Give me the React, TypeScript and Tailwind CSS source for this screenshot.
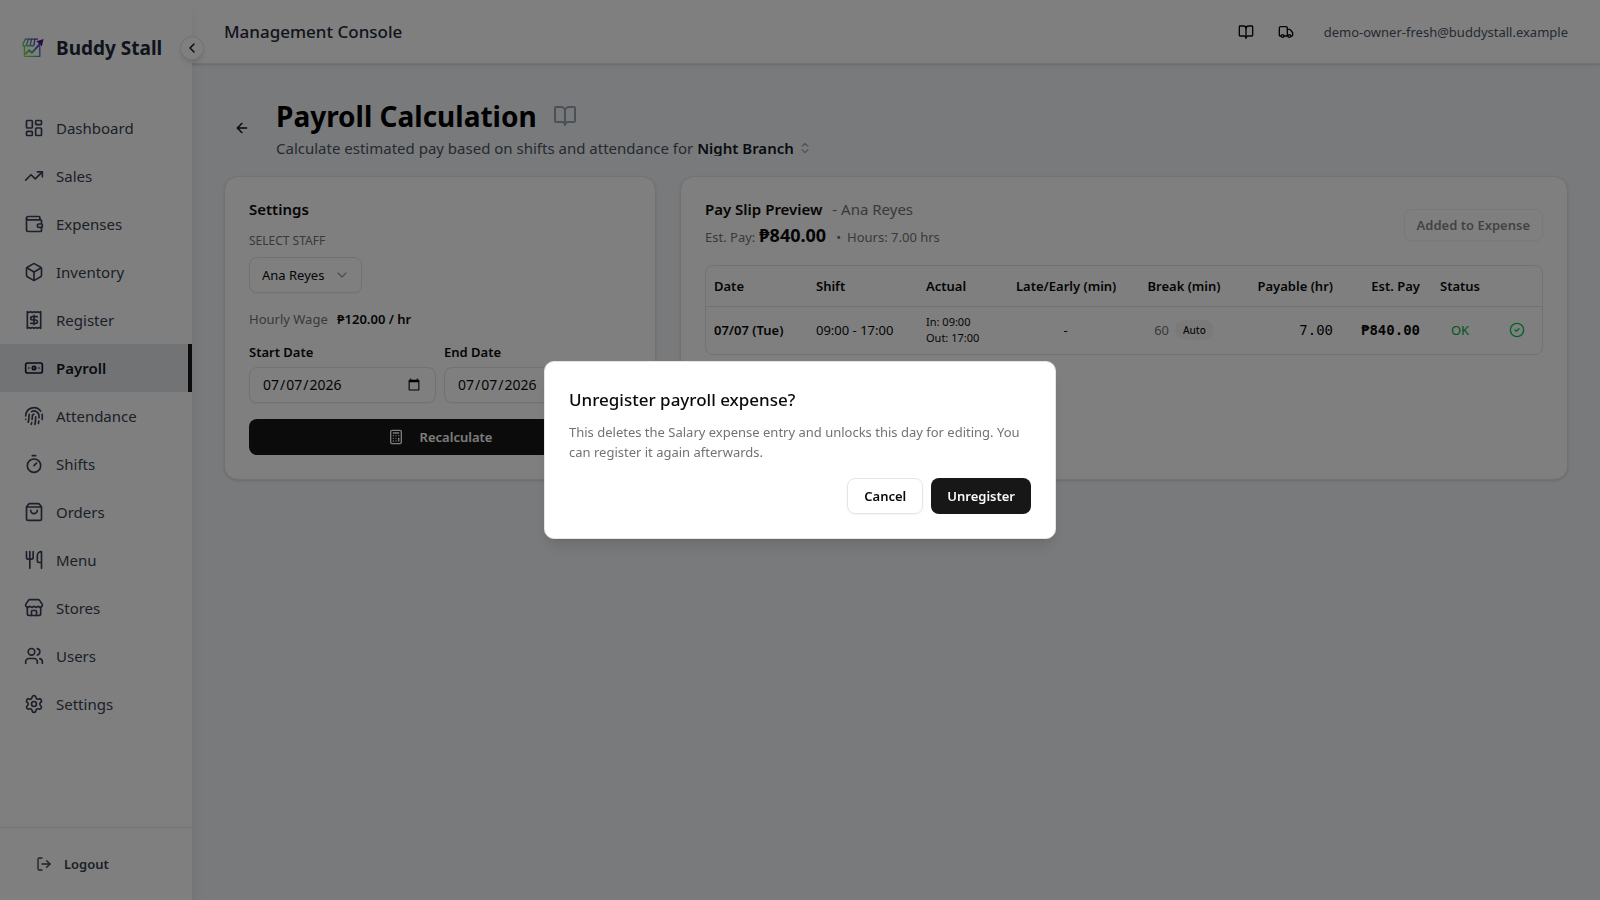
import {useState} from "react";
import {LayoutDashboard,TrendingUp,Wallet,Box,Receipt,Banknote,Fingerprint,Timer,ShoppingBag,Utensils,Store,Users,Settings,LogOut,BookOpen,Truck,ChevronLeft,ChevronDown,ChevronsUpDown,ArrowLeft,Calculator,CircleCheck} from "lucide-react";

const NAV=[
  {label:"Dashboard",icon:LayoutDashboard},
  {label:"Sales",icon:TrendingUp},
  {label:"Expenses",icon:Wallet},
  {label:"Inventory",icon:Box},
  {label:"Register",icon:Receipt},
  {label:"Payroll",icon:Banknote},
  {label:"Attendance",icon:Fingerprint},
  {label:"Shifts",icon:Timer},
  {label:"Orders",icon:ShoppingBag},
  {label:"Menu",icon:Utensils},
  {label:"Stores",icon:Store},
  {label:"Users",icon:Users},
  {label:"Settings",icon:Settings},
];

function Logo() {
  return (
    <svg viewBox="0 0 22 20" className="h-5 w-[22px] shrink-0" fill="none" strokeLinecap="round" strokeLinejoin="round">
      <defs>
        <linearGradient id="stall" x1="0" y1="18" x2="22" y2="2" gradientUnits="userSpaceOnUse">
          <stop offset="0" stopColor="#a3e635"/>
          <stop offset="0.35" stopColor="#4cc46a"/>
          <stop offset="0.65" stopColor="#4a5fb0"/>
          <stop offset="1" stopColor="#4c1d95"/>
        </linearGradient>
      </defs>
      <g stroke="url(#stall)" strokeWidth="1.3">
        <path d="M15.5 1.2H3.2L.8 6.2c0 2.6 3.6 2.6 3.8 0 .2 2.6 3.6 2.6 3.8 0 .2 2.6 3.4 2.6 3.8 0"/>
        <path d="M6.4 1.2 4.6 6.2M9.6 1.2 8.4 6.2M12.8 1.2l-.6 5"/>
        <path d="M2.4 8.4v10h15.4V8.6"/>
      </g>
      <path d="m3.8 15.6 3.4-3.4 2.6 2.6 8.4-9.2" stroke="url(#stall)" strokeWidth="2"/>
      <path d="M14.4 3.2 21.6 1l-1.8 7.4z" fill="#4c1d95"/>
    </svg>
  );
}

export default function App() {
  const [open,setOpen]=useState(true);
  const [staff,setStaff]=useState("Ana Reyes");
  const [start,setStart]=useState("2026-07-07");
  const [end,setEnd]=useState("2026-07-07");
  const dateInput="h-9 w-full min-w-0 rounded-lg border border-neutral-200 bg-white px-3 text-sm shadow-xs";
  return (
    <div className="flex min-h-screen bg-gray-100 font-['Noto_Sans',sans-serif] text-[13px] leading-5 text-neutral-950">
      <aside className="relative z-10 flex w-48 shrink-0 flex-col bg-white shadow-lg">
        <div className="flex h-24 items-center gap-3 pl-[22px]">
          <Logo/>
          <span className="text-[19px] font-bold text-gray-800">Buddy Stall</span>
        </div>
        <button aria-label="Collapse sidebar" className="absolute top-9 -right-3 flex size-6 items-center justify-center rounded-full border border-gray-200 bg-white shadow-md">
          <ChevronLeft className="size-4"/>
        </button>
        <nav className="flex-1 pt-2">
          {NAV.map(({label,icon:Icon})=>(
            <a key={label} href="#" className={`flex h-12 items-center gap-3 pl-6 text-[15px] ${label==="Payroll"?"border-r-4 border-neutral-900 bg-gray-200 font-semibold text-gray-900":"text-gray-700"}`}>
              <Icon className="size-5"/>{label}
            </a>
          ))}
        </nav>
        <div className="border-t border-gray-200 p-4">
          <button className="flex h-10 items-center gap-3 px-5 font-semibold text-gray-700"><LogOut className="size-4"/>Logout</button>
        </div>
      </aside>

      <div className="flex min-w-0 flex-1 flex-col">
        <header className="flex h-16 items-center justify-between border-b border-gray-200 bg-white px-8 shadow-sm">
          <span className="text-[17px] font-medium text-gray-800">Management Console</span>
          <div className="flex items-center gap-5">
            <div className="flex gap-1">
              <button aria-label="Guide" className="flex size-9 items-center justify-center"><BookOpen className="size-4"/></button>
              <button aria-label="Deliveries" className="flex size-9 items-center justify-center"><Truck className="size-4"/></button>
            </div>
            <span className="text-gray-600">demo-owner-fresh@buddystall.example</span>
          </div>
        </header>

        <main className="p-8">
          <div className="mb-4 flex items-center gap-4">
            <button aria-label="Back" className="flex size-9 items-center justify-center"><ArrowLeft className="size-4"/></button>
            <div>
              <div className="flex items-center gap-4">
                <h1 className="text-[28px] leading-10 font-bold text-black">Payroll Calculation</h1>
                <BookOpen className="size-6 text-gray-400"/>
              </div>
              <div className="flex h-6 items-center gap-1 text-[15px] text-gray-600">
                <span>Calculate estimated pay based on shifts and attendance for</span>
                <button className="flex items-center gap-1 font-semibold text-gray-900">
                  <span className="overflow-hidden leading-4">Night Branch</span>
                  <ChevronsUpDown className="size-3.5 text-gray-400"/>
                </button>
              </div>
            </div>
          </div>

          <div className="grid grid-cols-3 items-start gap-6">
            <section className="rounded-[14px] border border-neutral-200 bg-white p-6 shadow-sm">
              <h2 className="text-[15px] leading-4 font-semibold">Settings</h2>
              <label htmlFor="staff" className="mt-4 block text-xs leading-4 text-neutral-500">SELECT STAFF</label>
              <div className="relative mt-2 w-fit">
                <select id="staff" value={staff} onChange={e=>setStaff(e.target.value)} className="h-9 appearance-none rounded-lg border border-neutral-200 bg-white pr-9 pl-3 shadow-xs">
                  <option>Ana Reyes</option>
                </select>
                <ChevronDown className="pointer-events-none absolute top-2.5 right-3 size-4 text-neutral-400"/>
              </div>
              <p className="mt-4 text-neutral-500">Hourly Wage <span className="ml-1.5 font-semibold text-neutral-950">₱120.00 / hr</span></p>
              <div className="mt-4 grid grid-cols-2 gap-2">
                <div>
                  <label htmlFor="start" className="mb-2 block leading-[14px] font-semibold">Start Date</label>
                  <input id="start" type="date" value={start} onChange={e=>setStart(e.target.value)} className={dateInput}/>
                </div>
                <div>
                  <label htmlFor="end" className="mb-2 block leading-[14px] font-semibold">End Date</label>
                  <input id="end" type="date" value={end} onChange={e=>setEnd(e.target.value)} className={dateInput}/>
                </div>
              </div>
              <button className="mt-4 flex h-9 w-full items-center justify-center gap-4 rounded-lg bg-neutral-900 font-semibold text-neutral-50"><Calculator className="size-4"/>Recalculate</button>
            </section>

            <section className="col-span-2 self-stretch rounded-[14px] border border-neutral-200 bg-white p-6 shadow-sm">
              <div className="flex items-center justify-between">
                <div>
                  <h2 className="text-[15px] leading-4 font-semibold">Pay Slip Preview <span className="ml-1.5 font-normal text-neutral-500">- Ana Reyes</span></h2>
                  <p className="mt-1 flex h-7 items-baseline leading-7 text-neutral-500">Est. Pay:<span className="mx-1 text-lg leading-7 font-bold text-neutral-950">₱840.00</span><span className="mx-1.5">•</span>Hours: 7.00 hrs</p>
                </div>
                <button disabled className="h-8 rounded-lg border border-neutral-200 px-3 font-semibold opacity-50 shadow-xs">Added to Expense</button>
              </div>
              <div className="mt-4 overflow-hidden rounded-lg border border-neutral-200">
                <table className="w-full table-fixed">
                  <thead>
                    <tr className="h-10 border-b border-neutral-200 text-left whitespace-nowrap *:px-2 *:font-semibold">
                      <th className="w-[102px]">Date</th>
                      <th className="w-[110px]">Shift</th>
                      <th className="w-[90px]">Actual</th>
                      <th className="text-center">Late/Early (min)</th>
                      <th className="w-[122px] text-center">Break (min)</th>
                      <th className="w-24 text-right">Payable (hr)</th>
                      <th className="w-[87px] text-right">Est. Pay</th>
                      <th className="w-16 text-center">Status</th>
                      <th className="w-[50px]"></th>
                    </tr>
                  </thead>
                  <tbody>
                    <tr className="h-12 whitespace-nowrap *:px-2">
                      <td className="font-semibold">07/07 (Tue)</td>
                      <td>09:00 - 17:00</td>
                      <td className="text-[11px] leading-4">In: 09:00<br/>Out: 17:00</td>
                      <td className="text-center">-</td>
                      <td>
                        <div className="flex items-center justify-center gap-1.5 text-neutral-500">60<span className="rounded-full bg-neutral-100 px-2 text-[10px] font-medium text-neutral-900">Auto</span></div>
                      </td>
                      <td className="text-right font-['DejaVu_Sans_Mono',monospace] text-sm">7.00</td>
                      <td className="text-right font-['DejaVu_Sans_Mono',monospace] text-sm font-bold">₱840.00</td>
                      <td className="text-center text-green-600">OK</td>
                      <td><CircleCheck className="mx-auto size-4 text-green-500"/></td>
                    </tr>
                  </tbody>
                </table>
              </div>
            </section>
          </div>
        </main>
      </div>

      {open&&(
        <div className="fixed inset-0 z-50 flex items-center justify-center bg-black/50">
          <div role="alertdialog" aria-labelledby="dlg-title" aria-describedby="dlg-text" className="w-full max-w-lg rounded-[10px] border border-neutral-200 bg-white p-6 shadow-lg">
            <h2 id="dlg-title" className="text-[17px] leading-7 font-medium">Unregister payroll expense?</h2>
            <p id="dlg-text" className="mt-2 text-neutral-500">This deletes the Salary expense entry and unlocks this day for editing. You can register it again afterwards.</p>
            <div className="mt-4 flex justify-end gap-2">
              <button onClick={()=>setOpen(false)} className="h-9 rounded-lg border border-neutral-200 px-4 font-semibold shadow-xs">Cancel</button>
              <button onClick={()=>setOpen(false)} className="h-9 rounded-lg bg-neutral-900 px-4 font-semibold text-neutral-50">Unregister</button>
            </div>
          </div>
        </div>
      )}
    </div>
  );
}
